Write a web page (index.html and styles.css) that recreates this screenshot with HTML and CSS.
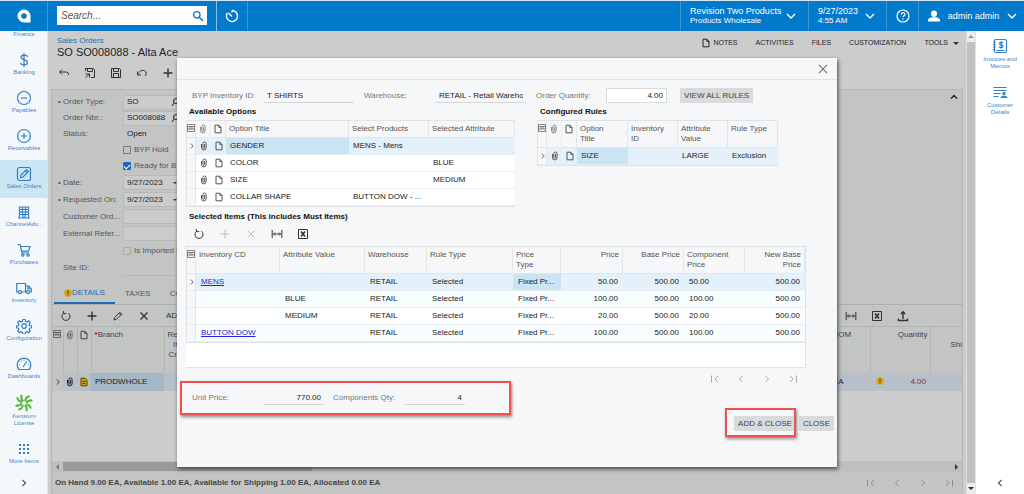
FILE: index.html
```html
<!DOCTYPE html>
<html lang="en">
<head>
<meta charset="utf-8">
<title>Sales Orders - SO008088</title>
<link rel="stylesheet" href="styles.css">
</head>
<body>
<svg class="defs" aria-hidden="true">
  <symbol id="clip" viewBox="0 0 8 10"><path d="M1.5 3v3.6a2.3 2.3 0 0 0 4.6 0V2.6a1.6 1.6 0 0 0-3.2 0v3.8a.8.8 0 0 0 1.7 0V3"/></symbol>
  <symbol id="doc" viewBox="0 0 8 10"><path d="M1 1.2h3.8L7 3.4v5.4H1zM4.8 1.2v2.2H7"/></symbol>
  <symbol id="grid" viewBox="0 0 8 8"><path d="M.5.5h7v7h-7zM.5 2.5h7M.5 5h7M3 2.5V5M5 2.5V5"/></symbol>
  <symbol id="refresh" viewBox="0 0 12 12"><path d="M3.6 3.2a4 4 0 1 0 4.8 0M3.4 1v2.6h2.8"/></symbol>
  <symbol id="plus" viewBox="0 0 12 12"><path d="M6 1.5v9M1.5 6h9"/></symbol>
  <symbol id="cross" viewBox="0 0 12 12"><path d="M2.5 2.5l7 7M9.5 2.5l-7 7"/></symbol>
  <symbol id="fit" viewBox="0 0 12 12"><path d="M1.2 2v8M10.8 2v8M2.500 6h7M4 4.500L2.500 6 4 7.500M8 4.500L9.500 6 8 7.500"/></symbol>
  <symbol id="excel" viewBox="0 0 12 12"><path d="M1.500 1.500h9v9h-9z"/><path class="thick" d="M4 3.500l4 5M8 3.500l-4 5"/></symbol>
  <symbol id="first" viewBox="0 0 12 12"><path d="M2.500 2.500v7M9 3L6 6l3 3"/></symbol>
  <symbol id="prev" viewBox="0 0 12 12"><path d="M7.500 3l-3 3 3 3"/></symbol>
  <symbol id="next" viewBox="0 0 12 12"><path d="M4.500 3l3 3-3 3"/></symbol>
  <symbol id="last" viewBox="0 0 12 12"><path d="M9.500 2.500v7M3 3l3 3-3 3"/></symbol>
  <symbol id="down" viewBox="0 0 12 12"><path d="M2 4l4 4 4-4"/></symbol>
  <symbol id="warn" viewBox="0 0 8 8"><circle cx="4" cy="4" r="3.700" fill="#d9a200" stroke="none"/><path stroke="#333" d="M4 1.700v2.800M4 5.400v1"/></symbol>
</svg>

<header class="topbar">
  <a class="logo" href="#" aria-label="Home"><svg class="i16" viewBox="0 0 16 16"><path fill="#fff" stroke="none" fill-rule="evenodd" d="M8 1.500A6.500 6.500 0 0 0 8 14.500h6.500V8A6.500 6.500 0 0 0 8 1.500zM8 5.200A2.800 2.800 0 1 1 8 10.800 2.800 2.800 0 0 1 8 5.200z"/></svg></a>
  <div class="search-wrap">
    <div class="search"><input type="text" placeholder="Search..." aria-label="Search"><svg class="i12" viewBox="0 0 12 12"><circle cx="4.800" cy="4.800" r="3.200"/><path d="M7.200 7.200L11 11"/></svg></div>
  </div>
  <button class="top-btn clock" aria-label="Recent"><svg class="i16" viewBox="0 0 16 16"><path d="M8 2.500a5.500 5.500 0 1 1-4.700 2.600M8 8.500L4.500 5M8 2.500v2M3.300 5.100l-.9.900"/></svg></button>
  <div class="spacer"></div>
  <button class="top-btn company"><span class="two"><span class="big">Revision Two Products</span><span>Products Wholesale</span></span><svg class="i12 bold" ><use href="#down"/></svg></button>
  <button class="top-btn date"><span class="two"><span class="big">9/27/2023</span><span>4:55 AM</span></span><svg class="i12 bold"><use href="#down"/></svg></button>
  <button class="top-btn help" aria-label="Help"><svg class="i16" viewBox="0 0 16 16"><circle cx="8" cy="8" r="6"/><path d="M6.200 6.600C6.200 4 9.900 4.200 9.900 6.400 9.900 7.700 8 7.700 8 9.300M8 10.500v1.200"/></svg></button>
  <button class="top-btn user"><svg class="i14" viewBox="0 0 14 14"><path fill="#fff" stroke="none" d="M7 1.500a3 3 0 0 1 3 3c0 2-1 3.500-3 3.500S4 6.500 4 4.500a3 3 0 0 1 3-3zM1 12.500V11c0-1.500 3-2.500 4-2.700h4c1 .2 4 1.200 4 2.700v1.500z"/></svg><span class="big">admin admin</span><svg class="i12 bold"><use href="#down"/></svg></button>
</header>

<div class="shell">
  <nav class="side">
    <a class="short" href="#">Finance</a>
    <a href="#"><svg viewBox="0 0 16 16"><path d="M11.500 5C11 2.500 5 2.300 5 5.200 5 8.300 11.500 7 11.500 10.500 11.500 13.600 5 13.500 4.500 10.800M8 1v14"/></svg>Banking</a>
    <a href="#"><svg viewBox="0 0 16 16"><circle cx="8" cy="8" r="6.500"/><path d="M5 8h6"/></svg>Payables</a>
    <a href="#"><svg viewBox="0 0 16 16"><circle cx="8" cy="8" r="6.500"/><path d="M5 8h6M8 5v6"/></svg>Receivables</a>
    <a class="active" href="#"><svg viewBox="0 0 16 16"><rect x="1.500" y="1.500" width="13" height="13" rx="2"/><path d="M4.500 11.500l.5-2.500 5.500-5.500 2 2L7 11zM9.200 4.800l2 2"/></svg>Sales Orders</a>
    <a href="#"><svg viewBox="0 0 16 16"><path d="M3.500 14V3h9v11M2 14h12M3.500 5.500h9M3.500 8h9M3.500 10.500h9M6.500 3v8M9.500 3v8M7 14v-3.500h2V14"/></svg>ChannelAdv...</a>
    <a href="#"><svg viewBox="0 0 16 16"><path d="M1.500 2.500h2.500l2 8.500h7M4.600 4.500h9.400l-1.500 4.700H5.600"/><circle cx="6.800" cy="13" r="1.200"/><circle cx="12" cy="13" r="1.200"/></svg>Purchases</a>
    <a href="#"><svg viewBox="0 0 16 16"><path d="M2.500 12H.7V3.500h8.800V12H5.500M9.500 6h3.300l2.500 3v3h-1.800M9.500 12h1M12 6v3h3"/><circle cx="4" cy="12.200" r="1.500"/><circle cx="12" cy="12.200" r="1.500"/></svg>Inventory</a>
    <a href="#"><svg viewBox="0 0 16 16"><circle cx="8" cy="8" r="2.300"/><path d="M6.800 1.500h2.400l.4 1.900 1.300.6 1.700-1.100 1.600 1.700-1 1.600.5 1.300 1.900.4v1.900l-1.900.4-.5 1.300 1 1.600-1.600 1.600-1.700-1-1.300.5-.4 1.900H6.800l-.4-1.900-1.300-.5-1.700 1-1.600-1.600 1-1.600-.5-1.300L.5 9.800V7.900l1.800-.4.500-1.300-1-1.600 1.600-1.700L5.100 4l1.300-.6z"/></svg>Configuration</a>
    <a href="#"><svg viewBox="0 0 16 16"><path d="M3 13.500a6.800 6.800 0 1 1 10 0zM7 11l3.800-5.500M3 9h1M5 5l.6.600M8 3.500v1M13 9h-1"/></svg>Dashboards</a>
    <a class="tall" href="#"><svg class="green" viewBox="0 0 16 16"><path d="M7.500 6.500Q4.500 4 6 .8M9 6.500Q9.500 2.500 13 2M10 8Q12 4.800 15.500 6M9.800 9.300Q13.500 9.500 14 13M8.500 10Q11.500 12 10 15.300M7 9.500Q6.500 13.500 3 14M6 8.300Q4 11.500.5 10M6.300 7Q2.500 6.500 2 3"/></svg>Kensium<br>License</a>
    <a href="#"><svg viewBox="0 0 16 16"><path class="dots" d="M3 4h2M7 4h2M11 4h2M3 8h2M7 8h2M11 8h2M3 12h2M7 12h2M11 12h2"/></svg>More Items</a>
    <button class="collapse" aria-label="Expand menu"><svg class="i12"><use href="#next"/></svg></button>
  </nav>

  <main class="main">
    <div class="page-head">
      <div>
        <a class="crumb" href="#">Sales Orders</a>
        <h1>SO SO008088 - Alta Ace</h1>
      </div>
      <div class="page-links">
        <button><svg class="doc"><use href="#doc"/></svg>NOTES</button><button>ACTIVITIES</button><button>FILES</button><button>CUSTOMIZATION</button><button>TOOLS<i class="caret"></i></button>
      </div>
    </div>
    <div class="tools page-tools">
      <button aria-label="Back"><svg viewBox="0 0 12 12"><path d="M4 2.500L1.500 5 4 7.500M1.500 5h7q2 0 2 3"/></svg></button>
      <button aria-label="Save and close"><svg viewBox="0 0 12 12"><path d="M1.500 4v-2.500h8l1 1v8H7M3.500 1.500v3h5v-3M5.500 10.500v-3.500h-4M1.500 10.500L5.500 7"/></svg></button>
      <button aria-label="Save"><svg viewBox="0 0 12 12"><path d="M1.500 1.500h8l1 1v8h-9zM3.500 1.500v3h5v-3M3.500 10.500v-4h5v4"/></svg></button>
      <button aria-label="Undo"><svg viewBox="0 0 12 12"><path d="M1.500 4.500v3.500h3.500M1.500 8C3 3 9.500 1.500 10.200 6q.2 1.600-1 3"/></svg></button>
      <button aria-label="Add"><svg class="bold"><use href="#plus"/></svg></button>
    </div>

    <section class="panel">
      <div class="form-wrap">
        <div class="form">
          <label class="req" for="ot">Order Type:</label><div class="field"><input id="ot" value="SO"><svg class="i10" viewBox="0 0 10 10"><circle cx="6" cy="4" r="2.500"/><path d="M4.200 6L2 9"/></svg></div>
          <label for="on">Order Nbr.:</label><div class="field"><input id="on" value="SO008088"><svg class="i10" viewBox="0 0 10 10"><circle cx="6" cy="4" r="2.500"/><path d="M4.200 6L2 9"/></svg></div>
          <span>Status:</span><span class="val">Open</span>
          <span></span><label class="check"><input type="checkbox">BYP Hold</label>
          <span></span><label class="check"><input type="checkbox" checked>Ready for BYP</label>
        </div>
        <div class="form wide">
          <label class="req" for="dt">Date:</label><div class="field"><input id="dt" value="9/27/2023"><i class="caret"></i></div>
          <label class="req" for="rq">Requested On:</label><div class="field"><input id="rq" value="9/27/2023"><i class="caret"></i></div>
          <label for="co">Customer Ord...</label><div class="field"><input id="co"></div>
          <label for="er">External Refer...</label><div class="field"><input id="er"></div>
          <span></span><label class="check dim"><input type="checkbox">Is Imported P</label>
          <span>Site ID:</span><span class="line"></span>
        </div>
        <button class="fold" aria-label="Collapse form"><svg viewBox="0 0 12 12"><path d="M3 7.500l3-3 3 3"/></svg></button>
      </div>
      <div class="tabs"><button class="on"><svg class="i8"><use href="#warn"/></svg>DETAILS</button><button>TAXES</button><button>COMMISSIONS</button></div>
      <div class="tools grid-tools">
        <button aria-label="Refresh"><svg><use href="#refresh"/></svg></button>
        <button aria-label="Add row"><svg class="bold"><use href="#plus"/></svg></button>
        <button aria-label="Edit"><svg viewBox="0 0 12 12"><path d="M2 10l.7-2.500L8 2.200 9.800 4 4.500 9.300zM7 3.200L8.800 5"/></svg></button>
        <button aria-label="Delete"><svg class="bold"><use href="#cross"/></svg></button>
        <button class="txt">ADD ITEMS</button>
        <span class="spacer"></span>
        <button aria-label="Fit columns"><svg><use href="#fit"/></svg></button>
        <button aria-label="Export"><svg><use href="#excel"/></svg></button>
        <button aria-label="Upload"><svg class="bold" viewBox="0 0 12 12"><path d="M6 9V2M3.800 4L6 1.800 8.200 4M1.500 8.500v2h9v-2"/></svg></button>
      </div>
      <table class="back-grid">
        <colgroup><col class="w11"><col class="w14"><col class="w14"><col class="w73"><col class="w31"><col><col class="w41"><col class="w60"><col class="w32"></colgroup>
        <thead><tr><th class="ic"><svg class="grid"><use href="#grid"/></svg></th><th class="ic faint"><svg class="doc"><use href="#clip"/></svg></th><th class="ic"><svg class="doc"><use href="#doc"/></svg></th><th><b class="star">*</b>Branch</th><th class="r">Related<br>Items<br>Create</th><th></th><th>UOM</th><th class="r">Quantity</th><th class="ship"><br>Shi</th></tr></thead>
        <tbody><tr><td class="ic"><svg class="i10"><use href="#next"/></svg></td><td class="ic"><svg class="doc"><use href="#clip"/></svg></td><td class="ic"><svg class="doc noted" viewBox="0 0 8 10"><path d="M1 1.200h4L7 3.400v5.400H1zM2.500 4.500h3M2.500 6.500h3"/></svg></td><td class="cur">PRODWHOLE</td><td></td><td></td><td>EA</td><td class="r qty"><svg class="i8"><use href="#warn"/></svg><span>4.00</span></td><td></td></tr></tbody>
      </table>
      <div class="empty"></div>
      <div class="hscroll"><i class="arr lt"></i><div class="track"><div class="thumb"></div></div><i class="arr rt"></i></div>
      <footer class="status"><span>On Hand 9.00 EA, Available 1.00 EA, Available for Shipping 1.00 EA, Allocated 0.00 EA</span>
        <div class="pager"><button aria-label="First"><svg><use href="#first"/></svg></button><button aria-label="Previous"><svg><use href="#prev"/></svg></button><button aria-label="Next"><svg><use href="#next"/></svg></button><button aria-label="Last"><svg><use href="#last"/></svg></button></div>
      </footer>
    </section>

    <section class="dialog" role="dialog" aria-label="Configure options">
      <div class="dlg-head"><button aria-label="Close dialog"><svg class="i14"><use href="#cross"/></svg></button></div>
      <div class="dlg-body">
        <div class="row top">
          <label class="l1" for="inv">BYP Inventory ID:</label><input class="under w90" id="inv" value="T SHIRTS" readonly>
          <label class="l2" for="wh">Warehouse:</label><input class="under w90" id="wh" value="RETAIL - Retail Warehouse" readonly>
          <label class="l3" for="oq">Order Quantity:</label><input class="box" id="oq" value="4.00">
          <button class="btn">VIEW ALL RULES</button>
        </div>
        <div class="pair">
          <div class="opt">
            <h2>Available Options</h2>
            <table class="g">
              <colgroup><col class="w9"><col class="w15"><col class="w15"><col><col class="w80"><col class="w86"></colgroup>
              <thead><tr><th class="ic"><svg class="grid"><use href="#grid"/></svg></th><th class="ic faint"><svg class="doc"><use href="#clip"/></svg></th><th class="ic"><svg class="doc"><use href="#doc"/></svg></th><th>Option Title</th><th>Select Products</th><th>Selected Attribute</th></tr></thead>
              <tbody>
                <tr class="sel"><td class="ic"><svg class="i10"><use href="#next"/></svg></td><td class="ic"><svg class="doc"><use href="#clip"/></svg></td><td class="ic"><svg class="doc"><use href="#doc"/></svg></td><td class="cur">GENDER</td><td>MENS - Mens</td><td></td></tr>
                <tr><td class="ic"></td><td class="ic"><svg class="doc"><use href="#clip"/></svg></td><td class="ic"><svg class="doc"><use href="#doc"/></svg></td><td>COLOR</td><td></td><td>BLUE</td></tr>
                <tr><td class="ic"></td><td class="ic"><svg class="doc"><use href="#clip"/></svg></td><td class="ic"><svg class="doc"><use href="#doc"/></svg></td><td>SIZE</td><td></td><td>MEDIUM</td></tr>
                <tr><td class="ic"></td><td class="ic"><svg class="doc"><use href="#clip"/></svg></td><td class="ic"><svg class="doc"><use href="#doc"/></svg></td><td>COLLAR SHAPE</td><td>BUTTON DOW - ...</td><td></td></tr>
              </tbody>
            </table>
          </div>
          <div class="rules">
            <h2>Configured Rules</h2>
            <table class="g">
              <colgroup><col class="w9"><col class="w15"><col class="w15"><col><col class="w50"><col class="w50"><col class="w50"></colgroup>
              <thead><tr><th class="ic"><svg class="grid"><use href="#grid"/></svg></th><th class="ic faint"><svg class="doc"><use href="#clip"/></svg></th><th class="ic"><svg class="doc"><use href="#doc"/></svg></th><th>Option<br>Title</th><th>Inventory<br>ID</th><th>Attribute<br>Value</th><th>Rule Type</th></tr></thead>
              <tbody><tr class="sel"><td class="ic"><svg class="i10"><use href="#next"/></svg></td><td class="ic"><svg class="doc"><use href="#clip"/></svg></td><td class="ic"><svg class="doc"><use href="#doc"/></svg></td><td class="cur">SIZE</td><td></td><td>LARGE</td><td>Exclusion</td></tr></tbody>
            </table>
          </div>
        </div>
        <h2>Selected Items (This includes Must Items)</h2>
        <div class="tools dlg-tools">
          <button aria-label="Refresh"><svg><use href="#refresh"/></svg></button>
          <button aria-label="Add" disabled><svg><use href="#plus"/></svg></button>
          <button aria-label="Delete" disabled><svg><use href="#cross"/></svg></button>
          <button aria-label="Fit columns"><svg><use href="#fit"/></svg></button>
          <button aria-label="Export"><svg><use href="#excel"/></svg></button>
        </div>
        <div class="items">
          <table class="g">
            <colgroup><col class="w9"><col><col class="w85"><col class="w62"><col class="w86"><col class="w48"><col class="w62"><col class="w61"><col class="w61"><col class="w60"></colgroup>
            <thead><tr><th class="ic"><svg class="grid"><use href="#grid"/></svg></th><th>Inventory CD</th><th>Attribute Value</th><th>Warehouse</th><th>Rule Type</th><th>Price<br>Type</th><th class="r">Price</th><th class="r">Base Price</th><th>Component<br>Price</th><th class="r">New Base<br>Price</th></tr></thead>
            <tbody>
              <tr class="sel"><td class="ic"><svg class="i10"><use href="#next"/></svg></td><td><a href="#">MENS</a></td><td></td><td>RETAIL</td><td>Selected</td><td class="cur">Fixed Pr...</td><td class="r">50.00</td><td class="r">500.00</td><td>50.00</td><td class="r">500.00</td></tr>
              <tr class="alt"><td class="ic"></td><td></td><td>BLUE</td><td>RETAIL</td><td>Selected</td><td>Fixed Pr...</td><td class="r">100.00</td><td class="r">500.00</td><td>100.00</td><td class="r">500.00</td></tr>
              <tr><td class="ic"></td><td></td><td>MEDIUM</td><td>RETAIL</td><td>Selected</td><td>Fixed Pr...</td><td class="r">20.00</td><td class="r">500.00</td><td>20.00</td><td class="r">500.00</td></tr>
              <tr class="alt"><td class="ic"></td><td><a href="#">BUTTON DOW</a></td><td></td><td>RETAIL</td><td>Selected</td><td>Fixed Pr...</td><td class="r">100.00</td><td class="r">500.00</td><td>100.00</td><td class="r">500.00</td></tr>
            </tbody>
          </table>
        </div>
        <div class="pager dlg-pager"><button aria-label="First"><svg><use href="#first"/></svg></button><button aria-label="Previous"><svg><use href="#prev"/></svg></button><button aria-label="Next"><svg><use href="#next"/></svg></button><button aria-label="Last"><svg><use href="#last"/></svg></button></div>
        <div class="row totals">
          <label class="l1" for="up">Unit Price:</label><input class="under num" id="up" value="770.00" readonly>
          <label class="l2" for="cq">Components Qty:</label><input class="under num" id="cq" value="4" readonly>
          <div class="mark mark-totals"></div>
        </div>
        <div class="actions"><div class="marked"><button class="btn">ADD &amp; CLOSE</button><div class="mark mark-add"></div></div><button class="btn">CLOSE</button></div>
      </div>
    </section>
  </main>

  <div class="vscroll"><span class="vbtn"><i class="arr up"></i></span><div class="vthumb"></div><span class="vbtn"><i class="arr dn"></i></span></div>

  <aside class="right">
    <a href="#"><svg viewBox="0 0 16 16"><rect x="2.500" y="1.500" width="12" height="13" rx="1.500"/><path d="M1 4h2.500M1 6.500h2.500M1 9h2.500M1 11.500h2.500M4.500 12.500h8M11 5.200C10 3.600 7.200 4.100 7.500 5.700 7.800 7.300 11 6.500 11 8.400 11 10 8 10.200 7 8.700M9.200 3.300v7.200"/></svg>Invoices and<br>Memos</a>
    <a href="#"><svg viewBox="0 0 16 16"><path d="M1.500 3.500h13M1.500 6.500h13M1.500 9.500h7M1.500 12.500h5"/><path fill="#3a87cb" stroke="none" d="M12 7.800a1.700 1.700 0 0 1 0 3.400 1.700 1.700 0 0 1 0-3.400zM8.500 14v-1l2-1.200h3l2 1.200v1z"/></svg>Customer<br>Details</a>
    <button class="collapse" aria-label="Expand panel"><svg class="i12"><use href="#prev"/></svg></button>
  </aside>
</div>
</body>
</html>
```
FILE: styles.css
```css
* { box-sizing: border-box; }
body {
  margin: 0; min-height: 100vh; display: flex; flex-direction: column;
  font: 8px/10px "Liberation Sans", Arial, sans-serif; color: #333; background: #ccc;
}
button, input { font: inherit; color: inherit; border: 0; padding: 0; margin: 0; background: none; }
a { color: inherit; text-decoration: none; }
h1, h2 { margin: 0; }
svg { fill: none; stroke: currentColor; stroke-width: 1; flex: none; display: block; }
.defs { position: absolute; width: 0; height: 0; }
.thick { stroke-width: 1.600; }
.bold { stroke-width: 1.400; }
.spacer { flex: 1; }
.i8 { width: 8px; height: 8px; }
.i10 { width: 10px; height: 10px; }
.i12 { width: 12px; height: 12px; }
.i14 { width: 14px; height: 14px; }
.i16 { width: 16px; height: 16px; }
.doc { width: 8px; height: 10px; }
.grid { width: 8px; height: 8px; stroke-width: .7; }
.caret { border: 3px solid transparent; border-top-color: #333; border-bottom: 0; display: inline-block; }

/* top bar */
.topbar { height: 31px; display: flex; background: #027acc; border-top: 1px solid #d5e6f2; color: #fff; }
.logo { width: 48px; display: grid; place-items: center; border-right: 1px solid #3c97d7; }
.search-wrap { width: 169px; padding: 5px 9px; border-right: 1px solid #8cc2e8; }
.search { height: 19px; background: #fff; display: flex; align-items: center; padding: 0 3px 0 4px; color: #0a78c8; }
.search svg { stroke-width: 1.400; }
.search input { flex: 1; min-width: 0; font-size: 10px; color: #333; outline: 0; }
.search input::placeholder { color: #555; font-style: italic; }
.top-btn { display: flex; align-items: center; justify-content: space-between; border-left: 1px solid #3c97d7; }
.top-btn.clock { width: 31px; border-left: 0; border-right: 1px solid #3c97d7; justify-content: center; }
.clock svg { stroke-width: 1.400; }
.two { display: flex; flex-direction: column; text-align: left; line-height: 10px; }
.big { font-size: 9px; }
.company { width: 128px; padding: 0 11px 0 9px; }
.date { width: 78px; padding: 0 10px 0 9px; }
.help { width: 32px; justify-content: center; }
.help svg { stroke-width: 1.200; }
.user { width: 106px; padding: 0 6px 0 8px; }

.shell { flex: 1; display: flex; }

/* side navigation */
.side { width: 48px; flex: none; background: #f5f8fb; display: flex; flex-direction: column; box-shadow: inset -1px 0 #e4e8eb; }
.side a { height: 38px; display: flex; flex-direction: column; align-items: center; padding-top: 6px; gap: 1px; font-size: 6px; line-height: 7px; color: #3a87cb; text-align: center; }
.side svg, .right svg { width: 16px; height: 16px; color: #2f80c6; stroke-width: 1.200; }
.side .short { height: 15px; padding-top: 0; }
.side .tall { height: 47px; }
.side .active { background: #cbe5f5; }
.side svg.green { width: 18px; height: 18px; color: #55b82e; stroke-width: 1.800; }
.side .dots { stroke-width: 2; }
.collapse { margin-top: auto; height: 17px; display: grid; place-items: start center; color: #555; }
.side .collapse svg, .right .collapse svg { width: 12px; height: 12px; color: #555; }

/* page */
.main { flex: 1; min-width: 0; position: relative; display: flex; flex-direction: column; padding: 5px 3px 0; background: #ccc; }
.page-head { display: flex; justify-content: space-between; padding: 0 4px 0 6px; }
.crumb { display: block; color: #1f6ca8; }
.page-head h1 { font-size: 11px; line-height: 13px; font-weight: 400; color: #222; }
.page-links { display: flex; gap: 18px; height: 14px; font-size: 7px; color: #222; }
.page-links button { display: flex; align-items: center; gap: 3px; }
.page-links .caret { margin-left: 2px; }
.tools { display: flex; align-items: center; gap: 14px; }
.tools button { display: flex; }
.tools svg { width: 12px; height: 12px; }
.page-tools { height: 27px; padding: 1px 7px 0; }
.panel { flex: 1; display: flex; flex-direction: column; margin-top: 3px; background: #c3c5c5; border: 1px solid #b4b6b6; border-bottom: 0; }
.form-wrap { position: relative; padding: 4px 6px 7px; color: #555; }
.form { display: grid; grid-template-columns: 65px 90px; grid-auto-rows: 16px; align-items: center; }
.form.wide { grid-auto-rows: 17px; }
.form > :nth-child(odd) { padding-left: 5px; white-space: nowrap; position: relative; }
.form .req::before { content: "•"; position: absolute; left: 0; }
.field { height: 15px; background: #cbcbcb; border: 1px solid #b8b8b8; display: flex; align-items: center; padding: 0 3px; color: #222; }
.field input { flex: 1; width: 0; }
.field .i10 { margin-right: 29px; }
.field .caret { margin-right: 32px; border-width: 2px 2px 0; }
.field input { outline: 0; }
.val { padding-left: 4px; color: #222; }
.check { display: flex; align-items: center; gap: 3px; }
.check input { appearance: none; width: 8px; height: 8px; border: 1px solid #777; border-radius: 1px; display: grid; place-items: center; }
.check input:checked { background: #1567c8; border-color: #1567c8; }
.check input:checked::after { content: ""; width: 5px; height: 3px; border: solid #fff; border-width: 0 0 1px 1px; transform: rotate(-45deg); }
.check.dim input { border-color: #aaa; }
.line { align-self: end; border-bottom: 1px solid #b8b8b8; }
.fold { position: absolute; top: 1px; right: 2px; }
.fold svg { width: 12px; height: 12px; stroke-width: 1.500; color: #222; }
.tabs { display: flex; height: 22px; padding-left: 2px; border-bottom: 1px solid #aeb0b0; color: #555; }
.tabs button { display: flex; align-items: center; margin-right: 19px; }
.tabs .on { width: 61px; padding-left: 10px; margin-right: 10px; color: #1a6db0; border-bottom: 2px solid #1a6db0; }
.grid-tools { height: 21px; padding: 0 53px 0 8px; }
.grid-tools .txt { margin-left: 2px; }
.back-grid { width: 100%; table-layout: fixed; border-collapse: collapse; }
.back-grid th { height: 46px; vertical-align: top; padding: 3px; font-weight: 400; text-align: left; color: #444; border-top: 1px solid #b2b4b4; border-right: 1px solid #b4b6b6; white-space: nowrap; }
.back-grid td { height: 18px; padding: 0 4px; background: #b7c0c9; white-space: nowrap; color: #222; }
.back-grid tr > .ic { padding-left: 0; padding-right: 0; }
.back-grid td.ic:first-child { background: #c3c5c5; }
.back-grid td.cur { background: #a4b7c5; }
.back-grid th.r { padding-right: 2px; }
.ic svg { margin: 0 auto; }
.faint { opacity: .7; }
.star { color: #c00; }
.r, .back-grid .r { text-align: right; }
.qty svg { display: inline-block; margin-right: 26px; vertical-align: middle; }
.back-grid .qty { color: #8a2f35; padding-right: 4px; padding-left: 0; }
.noted { fill: #d9a200; color: #554400; }
.back-grid .ship { padding-left: 20px; padding-right: 0; border-right: 0; }
.empty { flex: 1; background: #ccc; }
.hscroll { height: 11px; display: flex; align-items: center; padding: 0 4px; gap: 3px; background: #bfbfbf; }
.hscroll .track { flex: 1; height: 9px; }
.hscroll .thumb { width: 28%; height: 9px; margin-left: 1px; background: #999; }
.arr { border: 3px solid transparent; flex: none; }
.arr.lt { border-right-color: #777; border-left: 0; }
.arr.rt { border-left-color: #333; border-right: 0; }
.arr.up { border-bottom-color: #999; border-top: 0; }
.arr.dn { border-top-color: #333; border-bottom: 0; }
.status { height: 22px; display: flex; align-items: center; justify-content: space-between; padding: 0 7px 0 3px; font-weight: 700; color: #444; }
.pager { display: flex; gap: 14px; color: #8d8f8f; }
.pager button { display: flex; }
.pager svg { width: 12px; height: 12px; }
.vscroll { width: 10px; flex: none; background: #c1c1c1; display: flex; flex-direction: column; border-right: 1px solid #e2e2e2; border-left: 1px solid #ddd; }
.vbtn { height: 11px; display: grid; place-items: center; background: #ededed; }
.vthumb { flex: 1; }
.right { width: 48px; flex: none; background: #fff; display: flex; flex-direction: column; }
.right a { height: 46px; padding-top: 7px; display: flex; flex-direction: column; align-items: center; gap: 2px; font-size: 6px; line-height: 7px; text-align: center; color: #3a87cb; }

/* dialog */
.dialog { position: absolute; top: 27px; left: 129px; right: 129px; background: #f6f7f9; box-shadow: 1px 2px 4px #444; }
.dlg-head { height: 22px; border-bottom: 1px solid #e2e4e6; display: flex; justify-content: flex-end; align-items: center; padding-right: 7px; color: #777; }
.dlg-body { padding: 8px 31px 36px 9px; }
.row { display: flex; align-items: center; position: relative; height: 15px; color: #777; padding-left: 6px; }
.row input { height: 15px; color: #222; padding: 0 3px; outline: 0; }
.under { border-bottom: 1px solid #d4d6d8; }
.row .w90 { width: 90px; margin-right: 10px; }
.l1 { width: 72px; }
.l2 { width: 72px; }
.l3 { width: 70px; white-space: nowrap; }
.row .box { width: 61px; margin-right: 13px; background: #fff; border: 1px solid #d8dadc; text-align: right; }
.row .num { width: 60px; margin-right: 9px; text-align: right; }
.btn { height: 15px; background: #d9dadb; color: #444; padding: 0 4px; white-space: nowrap; }
h2 { font-size: 8px; line-height: 10px; color: #111; padding-left: 3px; }
.pair { display: grid; grid-template-columns: 329fr 269fr; gap: 22px; margin: 4px 0 5px; }
.rules { padding-right: 28px; }
.pair h2 { padding-bottom: 2px; height: 13px; }
.g { width: 100%; table-layout: fixed; border-collapse: separate; border-spacing: 0; border: 1px solid #e0e2e4; border-width: 1px 0 1px 1px; }
.g th { font-weight: 400; text-align: left; vertical-align: top; color: #555; background: #f6f7f9; padding: 3px; border-right: 1px solid #e4e6e8; border-bottom: 1px solid #e4e6e8; white-space: nowrap; }
.g td { height: 17px; padding: 0 4px; background: #fff; border-bottom: 1px solid #e6eff5; white-space: nowrap; overflow: hidden; color: #222; }
.g tr > .ic { padding-left: 0; padding-right: 0; }
.g td:first-child { background: #f6f7f9; border-right: 1px solid #e4e6e8; }
.g .alt td:not(:first-child) { background: #f8fdff; }
.g .sel td:not(:first-child) { background: #e4f1fa; }
.g .sel td.cur { background: #cbe4f4; }
.g .r { text-align: right; }
.g td.r { padding-right: 5px; }
.g a { color: #2222dd; text-decoration: underline; }
.g svg { color: #555; }
.dlg-tools { height: 24px; padding-left: 7px; }
.tools button:disabled { color: #bbb; }
.items { min-height: 122px; background: #fff; border-right: 1px solid #e0e2e4; border-bottom: 1px solid #e0e2e4; }
.items .g th { height: 26px; }
.items .g td { padding: 0 5px; }
.items .g td.ic { padding: 0; }
.dlg-pager { height: 22px; justify-content: flex-end; align-items: center; padding-right: 7px; color: #aaa; }
.actions { display: flex; justify-content: flex-end; gap: 3px; margin: 11px -28px 0 0; }
.marked { position: relative; }
.mark { position: absolute; border: 2px solid #f0504f; box-shadow: 1px 2px 3px #888; pointer-events: none; }
.mark-totals { left: -6px; top: -9px; width: 331px; height: 34px; }
.mark-add { left: -9px; right: 0; top: -8px; bottom: -6px; }

.w9 { width: 9px; } .w11 { width: 11px; } .w14 { width: 14px; } .w15 { width: 15px; }
.w31 { width: 31px; } .w32 { width: 32px; } .w41 { width: 41px; } .w48 { width: 48px; } .w50 { width: 50px; }
.w60 { width: 60px; } .w61 { width: 61px; } .w62 { width: 62px; } .w73 { width: 73px; }
.w80 { width: 80px; } .w85 { width: 85px; } .w86 { width: 86px; }
```
